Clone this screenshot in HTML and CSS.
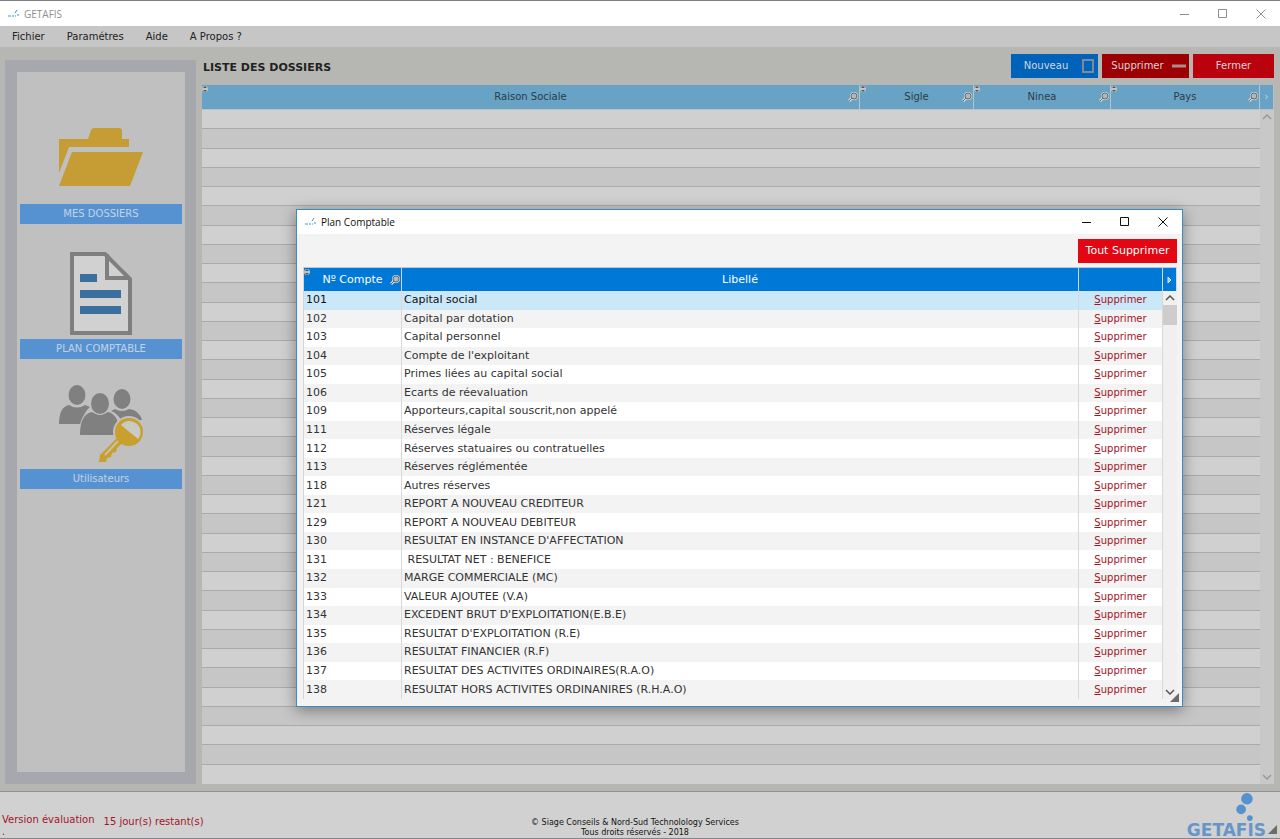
FILE: index.html
```html
<!DOCTYPE html>
<html lang="fr">
<head>
    <meta charset="UTF-8">
    <meta name="viewport" content="width=device-width, initial-scale=1.0">
    <title>GETAFIS</title>
    <link rel="stylesheet" href="styles.css">
</head>
<body>
<svg class="sprite" aria-hidden="true">
    <symbol id="logo-mini" viewBox="0 0 12 10">
        <path d="M0 7h3M4 7h2M7 7h1M9 6h2" stroke="#3d93c4" stroke-width="1"/>
        <path d="M7 4l2-3" stroke="#3d93c4" stroke-width="1"/>
    </symbol>
    <symbol id="loupe" viewBox="0 0 10 10">
        <path d="M4 6L1 9" stroke="#d8d8d8" stroke-width="3"/>
        <circle cx="6" cy="4" r="3" fill="#a9bcc6" stroke="#d8d8d8" stroke-width="2"/>
        <path d="M4 6L1 9" stroke="#666" stroke-width="1"/>
        <circle cx="6" cy="4" r="3" fill="#a9bcc6" stroke="#666" stroke-width="1"/>
    </symbol>
    <symbol id="tri" viewBox="0 0 6 8">
        <circle cx="3" cy="4" r="3" fill="#c4c4c4"/>
        <path d="M1 3l2-2 2 2zM1 5l2 2 2-2z" fill="#555"/>
    </symbol>
    <symbol id="haut" viewBox="0 0 10 6"><path d="M1 5l4-4 4 4" fill="none" stroke="currentColor" stroke-width="1.5"/></symbol>
    <symbol id="bas" viewBox="0 0 10 6"><path d="M1 1l4 4 4-4" fill="none" stroke="currentColor" stroke-width="1.5"/></symbol>
    <symbol id="reduire" viewBox="0 0 10 10"><path d="M0 5.5h9" stroke="currentColor"/></symbol>
    <symbol id="agrandir" viewBox="0 0 10 10"><path d="M.5 .5h8v8h-8z" fill="none" stroke="currentColor"/></symbol>
    <symbol id="fermer" viewBox="0 0 10 10"><path d="M.5 .5l9 9M9.5 .5l-9 9" stroke="currentColor"/></symbol>
    <symbol id="coin" viewBox="0 0 10 10"><path d="M10 0v10H0z" fill="currentColor"/></symbol>
</svg>

<header class="titlebar">
    <svg class="app-icon"><use href="#logo-mini"/></svg>
    <span class="app-name">GETAFIS</span>
    <div class="window-buttons">
        <button aria-label="Réduire"><svg><use href="#reduire"/></svg></button>
        <button aria-label="Agrandir"><svg><use href="#agrandir"/></svg></button>
        <button aria-label="Fermer la fenêtre"><svg><use href="#fermer"/></svg></button>
    </div>
</header>

<nav class="menu">
    <button>Fichier</button>
    <button>Paramétres</button>
    <button>Aide</button>
    <button>A Propos ?</button>
</nav>

<div class="content">
    <aside class="sidebar">
        <button class="tile">
            <svg class="tile-icon" viewBox="0 0 100 90" fill="#c69c34">
                <path d="M8 25h29l3-9q1-2 3-2h25q3 0 3 3v8h7v8H18L8 59z"/>
                <path d="M21 38h71L79 72H8z"/>
            </svg>
            <span>MES DOSSIERS</span>
        </button>
        <button class="tile">
            <svg class="tile-icon" viewBox="0 0 100 90">
                <path d="M21 5h33l25 25v54H21z" fill="#d1d1d1" stroke="#7f7f7f" stroke-width="4"/>
                <path d="M56 5v24h23" fill="none" stroke="#7f7f7f" stroke-width="4"/>
                <path d="M29 25h17v8H29zM29 41h41v8H29zM29 57h41v8H29z" fill="#3b6f9c"/>
            </svg>
            <span>PLAN COMPTABLE</span>
        </button>
        <button class="tile">
            <svg class="tile-icon short" viewBox="0 0 100 85">
                <g fill="#808080">
                    <ellipse cx="26" cy="11" rx="8.5" ry="10"/>
                    <path d="M8 40q0-17 10-19q8 5 16 0l5 2q-7 6-9 17z"/>
                    <ellipse cx="71" cy="15" rx="8.5" ry="10"/>
                    <path d="M60 27l4-2q7 4 14 0q10 1 13 11H70q-4-7-10-9z"/>
                </g>
                <g fill="#808080" stroke="#c0c0c0" stroke-width="2" paint-order="stroke">
                    <path d="M29 51q0-21 12-23q8 5 16 0q11 2 12 23z"/>
                    <ellipse cx="49" cy="19.500" rx="9" ry="10.500"/>
                </g>
                <circle cx="78" cy="48" r="16" fill="#c0c0c0"/>
                <path d="M68 52L49 71l-1 7h7l1-4 4-1 1-4 4-1 1-4 10-9z" fill="#c99f2d"/>
                <path d="M67 57L54 71" stroke="#c8c0ac" stroke-width="2"/>
                <circle cx="78" cy="48" r="14" fill="#c99f2d"/>
                <path d="M70 41a11 11 0 0 1 17 14z" fill="#c9c9c6"/>
            </svg>
            <span>Utilisateurs</span>
        </button>
    </aside>

    <main class="dossiers">
        <div class="toolbar">
            <h1>LISTE DES DOSSIERS</h1>
            <button class="btn nouveau">Nouveau<svg viewBox="0 0 12 14"><path d="M1 1h10v12H1z" fill="none" stroke="#7e8a96" stroke-width="2"/></svg></button>
            <button class="btn supprimer">Supprimer<svg viewBox="0 0 14 14"><path d="M0 7h14" stroke="#b08c8c" stroke-width="3"/></svg></button>
            <button class="btn quitter">Fermer</button>
        </div>
        <div class="grid-wrap">
            <table class="grid">
                <colgroup>
                    <col><col class="c-sigle"><col class="c-ninea"><col class="c-pays"><col class="c-bar">
                </colgroup>
                <thead>
                    <tr>
                        <th><svg class="tri"><use href="#tri"/></svg>Raison Sociale<svg class="loupe"><use href="#loupe"/></svg></th>
                        <th><svg class="tri"><use href="#tri"/></svg>Sigle<svg class="loupe"><use href="#loupe"/></svg></th>
                        <th><svg class="tri"><use href="#tri"/></svg>Ninea<svg class="loupe"><use href="#loupe"/></svg></th>
                        <th><svg class="tri"><use href="#tri"/></svg>Pays<svg class="loupe"><use href="#loupe"/></svg></th>
                        <th class="nav">›</th>
                    </tr>
                </thead>
                <tbody id="dossiers"></tbody>
            </table>
        </div>
    </main>
</div>

<footer>
    <div class="licence">
        <p>Version évaluation<br>.</p>
        <p class="jours">15 jour(s) restant(s)</p>
    </div>
    <p class="copyright">© Siage Conseils &amp; Nord-Sud Technolology Services<br>Tous droits réservés - 2018</p>
    <div class="brand">
        <svg class="bulles" viewBox="0 0 20 30" fill="#5591cf">
            <circle cx="12" cy="7" r="6"/>
            <circle cx="6" cy="18" r="5"/>
            <circle cx="15" cy="27" r="3"/>
        </svg>
        <span>GETAFIS</span>
    </div>
    <svg class="coin"><use href="#coin"/></svg>
</footer>

<section class="dialog" role="dialog" aria-labelledby="dialog-title">
    <div class="dialog-title">
        <svg class="app-icon"><use href="#logo-mini"/></svg>
        <h2 id="dialog-title">Plan Comptable</h2>
        <div class="window-buttons">
            <button aria-label="Réduire"><svg><use href="#reduire"/></svg></button>
            <button aria-label="Agrandir"><svg><use href="#agrandir"/></svg></button>
            <button aria-label="Fermer le plan comptable"><svg><use href="#fermer"/></svg></button>
        </div>
    </div>
    <div class="dialog-body">
        <button class="tout">Tout Supprimer</button>
        <table class="comptes">
            <colgroup>
                <col class="c-num"><col><col class="c-action"><col class="c-bar">
            </colgroup>
            <thead>
                <tr>
                    <th><svg class="tri"><use href="#tri"/></svg>Nº Compte<svg class="loupe"><use href="#loupe"/></svg></th>
                    <th>Libellé</th>
                    <th></th>
                    <th class="nav"><svg class="suite" viewBox="0 0 5 8"><path d="M1 1l3 3-3 3z" fill="#9ec3e6" stroke="#d5e6f5"/></svg></th>
                </tr>
            </thead>
            <tbody id="comptes"></tbody>
        </table>
    </div>
    <svg class="coin"><use href="#coin"/></svg>
</section>

<script>
    const comptes = [
        ["101", "Capital social"],
        ["102", "Capital par dotation"],
        ["103", "Capital personnel"],
        ["104", "Compte de l'exploitant"],
        ["105", "Primes liées au capital social"],
        ["106", "Ecarts de réevaluation"],
        ["109", "Apporteurs,capital souscrit,non appelé"],
        ["111", "Réserves légale"],
        ["112", "Réserves statuaires ou contratuelles"],
        ["113", "Réserves réglémentée"],
        ["118", "Autres réserves"],
        ["121", "REPORT A NOUVEAU CREDITEUR"],
        ["129", "REPORT A NOUVEAU DEBITEUR"],
        ["130", "RESULTAT EN INSTANCE D'AFFECTATION"],
        ["131", " RESULTAT NET : BENEFICE"],
        ["132", "MARGE COMMERCIALE (MC)"],
        ["133", "VALEUR AJOUTEE (V.A)"],
        ["134", "EXCEDENT BRUT D'EXPLOITATION(E.B.E)"],
        ["135", "RESULTAT D'EXPLOITATION (R.E)"],
        ["136", "RESULTAT FINANCIER (R.F)"],
        ["137", "RESULTAT DES ACTIVITES ORDINAIRES(R.A.O)"],
        ["138", "RESULTAT HORS ACTIVITES ORDINANIRES (R.H.A.O)"]
    ];
    const nbLignes = 35;

    // La barre de défilement occupe la dernière colonne sur toute la hauteur
    function barre(lignes) {
        return `<td class="bar" rowspan="${lignes}">
            <svg class="haut"><use href="#haut"/></svg>
            <span class="pouce"></span>
            <svg class="bas"><use href="#bas"/></svg>
        </td>`;
    }

    document.getElementById("comptes").innerHTML = comptes.map((c, i) =>
        `<tr><td>${c[0]}</td><td class="libelle">${c[1]}</td>
        <td class="action"><a href="#"><u>S</u>upprimer</a></td>${i === 0 ? barre(comptes.length) : ""}</tr>`
    ).join("");

    let lignes = "";
    for (let i = 0; i < nbLignes; i++) {
        lignes += `<tr><td></td><td></td><td></td><td></td>${i === 0 ? barre(nbLignes) : ""}</tr>`;
    }
    document.getElementById("dossiers").innerHTML = lignes;
</script>
</body>
</html>
```
FILE: styles.css
```css
/* Global Styles */
* {
    box-sizing: border-box;
}

body {
    font-family: Verdana, 'DejaVu Sans', sans-serif;
    font-size: 10px;
    line-height: 12px;
    color: #222;
    background-color: #b6b6b3;
    margin: 0;
    min-height: 100vh;
    display: flex;
    flex-direction: column;
}

h1, h2, p {
    margin: 0;
}

button {
    font: inherit;
    color: inherit;
    background: none;
    border: none;
    padding: 0;
    cursor: pointer;
}

svg {
    display: block;
}

.sprite {
    position: absolute;
    width: 0;
    height: 0;
}

/* Barre de titre */
.titlebar {
    display: flex;
    align-items: center;
    height: 26px;
    padding-left: 8px;
    background-color: white;
    border-top: 1px solid #7f7d80;
    color: #8f8f8f;
}

.app-icon {
    width: 12px;
    height: 10px;
    margin-right: 4px;
}

.app-name,
.dialog-title h2 {
    font-family: 'Segoe UI', 'Open Sans', sans-serif;
    font-size: 10px;
    font-weight: normal;
}

.window-buttons {
    display: flex;
    margin-left: auto;
}

.window-buttons button {
    width: 38px;
    height: 24px;
    display: flex;
    align-items: center;
    justify-content: center;
}

.window-buttons svg {
    width: 10px;
    height: 10px;
}

/* Menu */
.menu {
    display: flex;
    gap: 22px;
    height: 21px;
    padding: 0 12px;
    background-color: #c6c6c6;
}

/* Contenu */
.content {
    flex: 1;
    display: flex;
    gap: 6px;
    padding: 7px 6px 7px 5px;
    border-bottom: 1px solid #929292;
}

.sidebar {
    width: 191px;
    margin-top: 6px;
    padding: 42px 3px 17px;
    display: flex;
    flex-direction: column;
    gap: 25px;
    background-color: #c0c0c0;
    border: 12px solid #a7a8ad;
    border-right-width: 11px;
}

.tile-icon {
    width: 100px;
    height: 90px;
    margin: 0 auto;
}

.tile-icon.short {
    height: 85px;
}

.tile span {
    display: block;
    line-height: 20px;
    background-color: #5692d2;
    color: #c3d3e6;
}

.dossiers {
    flex: 1;
    display: flex;
    flex-direction: column;
}

.toolbar {
    display: flex;
    gap: 4px;
    align-items: center;
    height: 31px;
    padding-bottom: 7px;
}

.toolbar h1 {
    flex: 1;
    padding: 3px 1px 0;
    font-size: 11px;
    line-height: 12px;
}

.btn {
    display: flex;
    align-items: center;
    justify-content: center;
    gap: 8px;
    width: 87px;
    height: 24px;
    color: #d5d5d8;
}

.btn svg {
    width: 14px;
    height: 14px;
}

.nouveau {
    gap: 13px;
    padding-left: 10px;
    background-color: #0062b8;
}

.supprimer {
    padding-left: 6px;
    background-color: #9d0003;
}

.quitter {
    width: 81px;
    background-color: #b9020e;
}

/* Tableaux */
table {
    width: 100%;
    border-collapse: separate;
    border-spacing: 0;
    table-layout: fixed;
}

th {
    position: relative;
    padding: 0;
    font-weight: normal;
}

td {
    padding: 0;
}

.tri {
    position: absolute;
    top: 0;
    left: 0;
    width: 6px;
    height: 8px;
}

.loupe {
    position: absolute;
    right: 1px;
    top: 7px;
    width: 10px;
    height: 10px;
}

.c-bar {
    width: 14px;
}

.bar {
    position: relative;
    vertical-align: top;
}

.bar svg {
    width: 10px;
    height: 6px;
}

.haut {
    margin: 4px auto;
}

.bas {
    position: absolute;
    bottom: 4px;
    left: 2px;
}

.grid-wrap {
    flex: 1;
    display: flex;
}

.grid th {
    height: 25px;
    background-color: #68a3c6;
    border-right: 1px solid #b6c3ca;
    border-bottom: 1px solid #b6c3ca;
    color: #2b3b45;
}

.grid .nav {
    color: #c5d9e4;
}

.grid td {
    height: 19px;
    border-bottom: 1px solid #aaa;
    background-color: #d0d0d0;
}

.grid tr:nth-child(even) td {
    background-color: #c6c6c6;
}

.grid tr:last-child td,
.grid tr .bar {
    border-bottom: none;
}

.grid tr .bar {
    background-color: #c8c8c8;
    color: #999;
}

.c-sigle {
    width: 114px;
}

.c-ninea {
    width: 137px;
}

.c-pays {
    width: 149px;
}

/* Pied de page */
footer {
    position: relative;
    display: flex;
    justify-content: space-between;
    height: 47px;
    background-color: #d1d1d1;
    border-bottom: 1px solid #85838a;
}

.licence {
    flex: 1;
    display: flex;
    gap: 9px;
    padding: 22px 2px 0;
    color: #a3142a;
}

.jours {
    padding-top: 2px;
}

.copyright {
    padding-top: 26px;
    font-size: 8px;
    line-height: 10px;
    text-align: center;
    color: #111;
}

.brand {
    flex: 1;
    display: flex;
    flex-direction: column;
    align-items: flex-end;
    padding-right: 14px;
    font-size: 17px;
    font-weight: bold;
    line-height: 15px;
    color: #6796c6;
}

.bulles {
    width: 20px;
    height: 30px;
    margin: 0 11px 2px 0;
}

.coin {
    position: absolute;
    right: 3px;
    bottom: 4px;
    width: 9px;
    height: 9px;
    color: #6b6b6b;
}

/* Fenetre Plan Comptable */
.dialog {
    position: absolute;
    top: 209px;
    left: 296px;
    width: 887px;
    background-color: #f3f3f3;
    border: 1px solid #3a8cc4;
    box-shadow: 0 3px 14px rgba(0, 0, 0, 0.4);
    color: #333;
}

.dialog-title {
    display: flex;
    align-items: center;
    height: 24px;
    padding-left: 8px;
    background-color: white;
    color: #111;
}

.dialog-body {
    display: flex;
    flex-direction: column;
    gap: 4px;
    padding: 5px 5px 7px 6px;
    font-size: 11px;
}

.tout {
    align-self: flex-end;
    width: 99px;
    height: 24px;
    background-color: #e30613;
    color: white;
}

.comptes {
    height: 432px;
    border-left: 1px solid #d5d5d5;
}

.comptes th {
    height: 24px;
    background-color: #0078d7;
    border-right: 1px solid #cfdce8;
    border-top: 1px solid #b8c8d6;
    color: white;
}

.comptes td {
    padding-left: 2px;
    background-color: white;
    border-right: 1px solid #d8d8d8;
    white-space: pre;
}

.comptes tr:nth-child(even) td {
    background-color: #f3f3f3;
}

.comptes tbody tr:first-child td {
    background-color: #cbe8f8;
    color: #111;
}

.comptes .action {
    padding: 0;
    font-size: 10px;
    text-align: center;
}

.comptes a {
    color: #a5131f;
    text-decoration: none;
}

.comptes tbody tr:first-child .bar {
    padding: 0;
    background-color: #f0f0f0;
    border-right: none;
    color: #555;
    white-space: normal;
}

.comptes .pouce {
    display: block;
    height: 20px;
    background-color: #cdcdcd;
}

.suite {
    width: 5px;
    height: 8px;
    margin: 0 auto;
}

.c-num {
    width: 98px;
}

.c-action {
    width: 84px;
}
```
